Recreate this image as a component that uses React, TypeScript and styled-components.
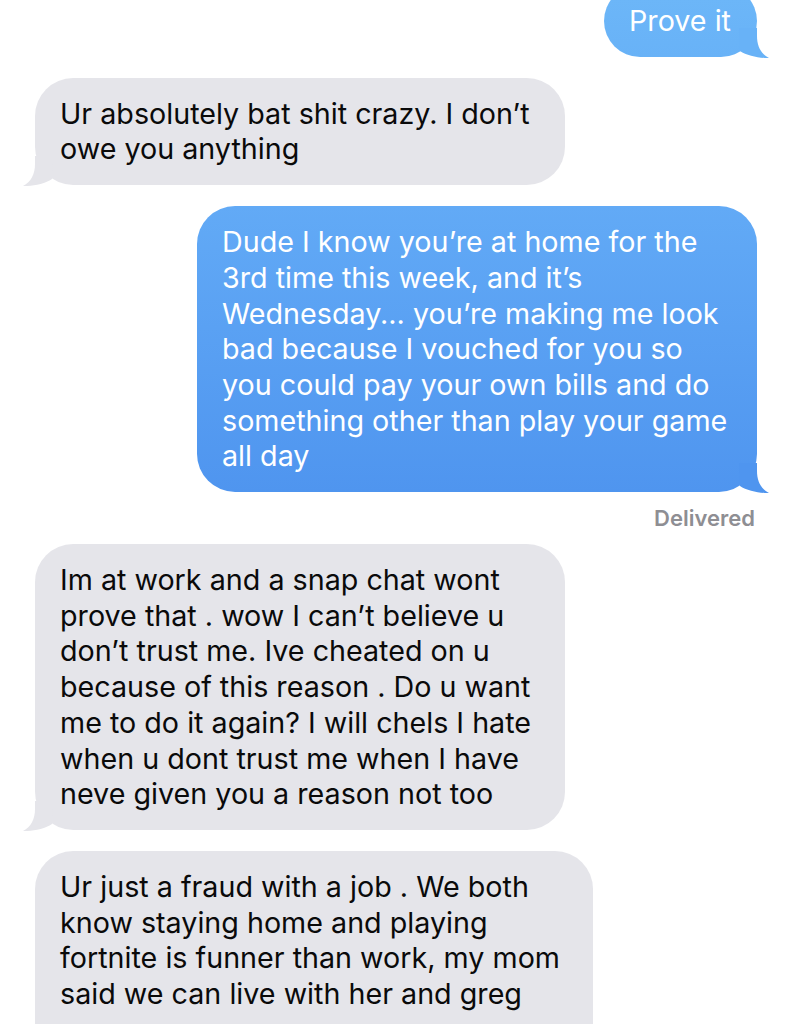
import React from "react";
import styled, { createGlobalStyle } from "styled-components";

const GlobalStyle = createGlobalStyle`
    html, body {
        margin: 0;
        padding: 0;
        background: #ffffff;
        overflow: hidden;
    }
    body {
        font-family: Inter, "Noto Sans", sans-serif;
        -webkit-font-smoothing: antialiased;
    }
`;

const Thread = styled.div`
    display: flex;
    flex-direction: column;
    gap: 21px;
    margin-top: -15px;
    padding: 0 33px 0 35px;
`;

const Row = styled.div<{ $out?: boolean }>`
    display: flex;
    flex-direction: column;
    align-items: ${(p) => (p.$out ? "flex-end" : "flex-start")};
`;

const Bubble = styled.div<{ $out?: boolean; $width: number; $top: string; $bottom: string }>`
    position: relative;
    box-sizing: border-box;
    width: ${(p) => p.$width}px;
    padding: 18px 24px 18px 25px;
    border-radius: 38px;
    background: linear-gradient(${(p) => p.$top}, ${(p) => p.$bottom});
    color: ${(p) => (p.$out ? "#ffffff" : "#0a0a0a")};
    font-size: 28.7px;
    line-height: 35.7px;
    white-space: nowrap;
`;

const Tail = styled.svg<{ $out?: boolean }>`
    position: absolute;
    bottom: -1px;
    width: 30px;
    height: 30px;
    ${(p) => (p.$out ? "right: -12px;" : "left: -12px; transform: scaleX(-1);")}
`;

const Status = styled.div`
    margin-top: 13px;
    margin-bottom: -8px;
    padding-right: 2px;
    font-size: 22px;
    line-height: 26px;
    font-weight: 600;
    color: #8e8e93;
`;

type Msg = {
    out?: boolean;
    width: number;
    lines: string[];
    tail?: boolean;
    top: string;
    bottom: string;
    status?: string;
};

const GRAY = "#e5e5ea";

const messages: Msg[] = [
    { out: true, width: 153, lines: ["Prove it"], tail: true, top: "#6db7f8", bottom: "#68b2f7" },
    {
        width: 530,
        lines: ["Ur absolutely bat shit crazy. I don\u2019t", "owe you anything"],
        tail: true,
        top: GRAY,
        bottom: GRAY,
    },
    {
        out: true,
        width: 560,
        lines: [
            "Dude I know you\u2019re at home for the",
            "3rd time this week, and it\u2019s",
            "Wednesday... you\u2019re making me look",
            "bad because I vouched for you so",
            "you could pay your own bills and do",
            "something other than play your game",
            "all day",
        ],
        tail: true,
        top: "#62aaf6",
        bottom: "#4f95ef",
        status: "Delivered",
    },
    {
        width: 530,
        lines: [
            "Im at work and a snap chat wont",
            "prove that . wow I can\u2019t believe u",
            "don\u2019t trust me. Ive cheated on u",
            "because of this reason . Do u want",
            "me to do it again? I will chels I hate",
            "when u dont trust me when I have",
            "neve given you a reason not too",
        ],
        tail: true,
        top: GRAY,
        bottom: GRAY,
    },
    {
        width: 558,
        lines: [
            "Ur just a fraud with a job . We both",
            "know staying home and playing",
            "fortnite is funner than work, my mom",
            "said we can live with her and greg",
            "",
        ],
        top: GRAY,
        bottom: GRAY,
    },
];

const TailShape = ({ out, color }: { out?: boolean; color: string }) => (
    <Tail $out={out} viewBox="0 0 30 30">
        <path d="M0 0 L18 0 L18 8 C18 18 22 26 30 30 C22 30.5 8 28 1 23 Z" fill={color} />
    </Tail>
);

const App = () => {
    return (
        <>
            <GlobalStyle />
            <Thread>
                {messages.map((m, i) => (
                    <Row key={i} $out={m.out}>
                        <Bubble $out={m.out} $width={m.width} $top={m.top} $bottom={m.bottom}>
                            {m.lines.map((l, j) => (
                                <div key={j}>{l || "\u00a0"}</div>
                            ))}
                            {m.tail && <TailShape out={m.out} color={m.bottom} />}
                        </Bubble>
                        {m.status && <Status>{m.status}</Status>}
                    </Row>
                ))}
            </Thread>
        </>
    );
};

export default App;
